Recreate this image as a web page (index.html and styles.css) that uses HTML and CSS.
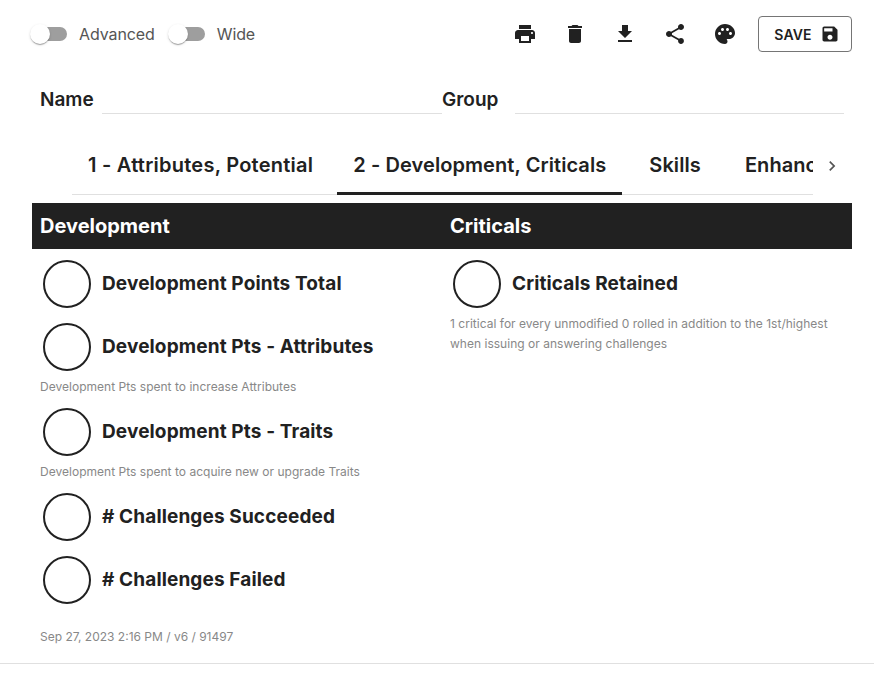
FILE: index.html
```html
<!DOCTYPE html>
<html lang="en">
<head>
<meta charset="utf-8">
<title>Character sheet</title>
<link rel="stylesheet" href="styles.css">
</head>
<body>
<div class="page">
  <header class="toolbar">
    <div class="toggles">
      <label class="toggle"><span class="switch"><span class="track"></span><span class="thumb"></span></span><span>Advanced</span></label>
      <label class="toggle"><span class="switch"><span class="track"></span><span class="thumb"></span></span><span>Wide</span></label>
    </div>
    <div class="actions">
      <span class="icon-btn"><svg viewBox="0 0 24 24"><path d="M19 8H5c-1.66 0-3 1.34-3 3v6h4v4h12v-4h4v-6c0-1.66-1.34-3-3-3zm-3 11H8v-5h8v5zm3-7c-.55 0-1-.45-1-1s.45-1 1-1 1 .45 1 1-.45 1-1 1zm-1-9H6v4h12V3z"/></svg></span>
      <span class="icon-btn"><svg viewBox="0 0 24 24"><path d="M6 19c0 1.1.9 2 2 2h8c1.1 0 2-.9 2-2V7H6v12zM19 4h-3.500l-1-1h-5l-1 1H5v2h14V4z"/></svg></span>
      <span class="icon-btn"><svg viewBox="0 0 24 24"><path d="M19 9h-4V3H9v6H5l7 7 7-7zM5 18v2h14v-2H5z"/></svg></span>
      <span class="icon-btn"><svg viewBox="0 0 24 24"><path d="M18 16.080c-.76 0-1.440.3-1.960.77L8.910 12.700c.05-.23.09-.46.09-.7s-.04-.47-.09-.7l7.050-4.110c.54.5 1.250.81 2.040.81 1.660 0 3-1.340 3-3s-1.340-3-3-3-3 1.340-3 3c0 .24.04.47.09.7L8.040 9.810C7.500 9.310 6.790 9 6 9c-1.660 0-3 1.340-3 3s1.340 3 3 3c.79 0 1.500-.31 2.040-.81l7.120 4.160c-.05.21-.08.43-.08.65 0 1.610 1.310 2.920 2.920 2.920 1.610 0 2.920-1.310 2.920-2.920s-1.310-2.920-2.920-2.920z"/></svg></span>
      <span class="icon-btn"><svg viewBox="0 0 24 24"><path d="M12 2C6.490 2 2 6.490 2 12s4.490 10 10 10c1.380 0 2.500-1.120 2.500-2.500 0-.61-.23-1.200-.64-1.670-.08-.1-.13-.21-.13-.33 0-.28.22-.5.5-.5H16c3.310 0 6-2.690 6-6 0-4.960-4.490-9-10-9zm5.500 11c-.83 0-1.500-.67-1.500-1.500s.67-1.500 1.500-1.500 1.500.67 1.500 1.500-.67 1.500-1.500 1.500zm-3-4c-.83 0-1.500-.67-1.500-1.500S13.670 6 14.500 6s1.500.67 1.500 1.500S15.330 9 14.500 9zM5 11.500c0-.83.67-1.500 1.500-1.500s1.500.67 1.500 1.500S7.330 13 6.500 13 5 12.330 5 11.500zm6-4c0 .83-.67 1.500-1.500 1.500S8 8.330 8 7.500 8.670 6 9.500 6s1.500.67 1.500 1.500z"/></svg></span>
      <button class="save" type="button">SAVE<svg viewBox="0 0 24 24"><path d="M17 3H5c-1.110 0-2 .9-2 2v14c0 1.100.89 2 2 2h14c1.100 0 2-.9 2-2V7l-4-4zm-5 16c-1.660 0-3-1.340-3-3s1.340-3 3-3 3 1.340 3 3-1.340 3-3 3zm3-10H5V5h10v4z"/></svg></button>
    </div>
  </header>

  <section class="identity">
    <span class="id-label name-label">Name</span><span class="id-line name-line"></span>
    <span class="id-label group-label">Group</span><span class="id-line group-line"></span>
  </section>

  <nav class="tabs">
    <div class="tab-scroll">
      <span class="tab tab-a">1 - Attributes, Potential</span>
      <span class="tab tab-b active">2 - Development, Criticals</span>
      <span class="tab tab-c">Skills</span>
      <span class="tab tab-d">Enhancements</span>
    </div>
    <span class="chevron"><svg viewBox="0 0 24 24"><path d="M10 6 8.590 7.410 13.170 12l-4.580 4.590L10 18l6-6z"/></svg></span>
  </nav>

  <main class="sheet">
    <div class="band">
      <h2 class="band-title">Development</h2>
      <h2 class="band-title">Criticals</h2>
    </div>
    <div class="cols">
      <div class="col col-left">
        <div class="stat"><span class="dot"></span><span class="stat-label">Development Points Total</span></div>
        <div class="stat"><span class="dot"></span><span class="stat-label">Development Pts - Attributes</span></div>
        <p class="hint">Development Pts spent to increase Attributes</p>
        <div class="stat"><span class="dot"></span><span class="stat-label">Development Pts - Traits</span></div>
        <p class="hint">Development Pts spent to acquire new or upgrade Traits</p>
        <div class="stat"><span class="dot"></span><span class="stat-label"># Challenges Succeeded</span></div>
        <div class="stat"><span class="dot"></span><span class="stat-label"># Challenges Failed</span></div>
      </div>
      <div class="col col-right">
        <div class="stat"><span class="dot"></span><span class="stat-label">Criticals Retained</span></div>
        <p class="hint hint-wrap">1 critical for every unmodified 0 rolled in addition to the 1st/highest when issuing or answering challenges</p>
      </div>
    </div>
    <p class="stamp">Sep 27, 2023 2:16 PM / v6 / 91497</p>
  </main>
  <hr class="rule">
</div>
</body>
</html>
```
FILE: styles.css
```css
* { box-sizing: border-box; }
html, body { margin: 0; background: #fff; }
body { font-family: Inter, "Liberation Sans", sans-serif; color: #212121; overflow: hidden; }
.page { width: 874px; height: 681px; }

.toolbar { display: flex; justify-content: space-between; align-items: center; padding: 16px 22px 0 21px; height: 52px; }
.toggles { display: flex; align-items: center; }
.toggle { display: flex; align-items: center; font-size: 16px; color: #555; letter-spacing: -.1px; margin-right: 4px; }
.switch { position: relative; display: block; width: 58px; height: 38px; }
.track { position: absolute; left: 12px; top: 12px; width: 34px; height: 14px; border-radius: 7px; background: #9e9e9e; }
.thumb { position: absolute; left: 9px; top: 9px; width: 20px; height: 20px; border-radius: 50%; background: #fff; box-shadow: 0 2px 1px -1px rgba(0,0,0,.2), 0 1px 1px rgba(0,0,0,.14), 0 1px 3px rgba(0,0,0,.12); }
.actions { display: flex; align-items: center; }
.icon-btn { display: flex; width: 24px; height: 24px; margin-right: 26px; }
.icon-btn svg { width: 24px; height: 24px; fill: #212121; }
.actions .icon-btn:nth-child(5) { margin-right: 21px; }
.save { display: flex; align-items: center; justify-content: center; gap: 8px; width: 94px; height: 36px; padding: 0 0 0 4px; background: #fff; border: 1px solid #757575; border-radius: 4px; font: 600 14px Inter, "Liberation Sans", sans-serif; letter-spacing: .2px; color: #212121; }
.save svg { width: 20px; height: 20px; fill: #212121; }

.identity { display: flex; align-items: flex-end; height: 62px; padding-left: 40px; }
.id-label { font-size: 19px; font-weight: 600; line-height: 26px; margin-bottom: 1px; }
.name-label { width: 62px; }
.group-label { width: 73px; }
.id-line { display: block; height: 1px; background: #e0e0e0; }
.name-line { width: 340px; }
.group-line { width: 329px; }

.tabs { display: flex; height: 48px; margin: 32px 0 0 72px; }
.tab-scroll { display: flex; width: 741px; height: 49px; overflow: hidden; box-shadow: inset 0 -1px 0 #e0e0e0; white-space: nowrap; }
.tab { flex: none; height: 49px; padding: 0 16px; font-size: 20px; font-weight: 600; line-height: 38px; letter-spacing: .08px; }
.tab-a { letter-spacing: .25px; }
.tab-b { margin-left: 8px; }
.tab-c { margin-left: 11px; }
.tab-d { margin-left: 12px; }
.active { border-bottom: 3px solid #212121; }
.chevron { display: flex; align-items: center; justify-content: center; width: 38px; height: 40px; }
.chevron svg { width: 20px; height: 20px; fill: #555; }

.sheet { margin: 9px 22px 0 32px; }
.band { display: grid; grid-template-columns: 410px 1fr; align-items: center; height: 46px; background: #212121; padding-left: 8px; }
.band-title { margin: 0; font-size: 20px; font-weight: 700; line-height: 46px; color: #fff; }
.cols { display: grid; grid-template-columns: 410px 1fr; height: 378px; padding-top: 11px; }
.col-left { padding-left: 8px; }
.col-right { padding-left: 8px; }
.stat { display: flex; align-items: center; height: 48px; margin-bottom: 15px; padding-left: 3px; }
.dot { flex: none; width: 48px; height: 48px; border: 2px solid #212121; border-radius: 50%; margin-right: 11px; }
.stat-label { font-size: 19px; font-weight: 700; line-height: 24px; letter-spacing: .13px; white-space: nowrap; }
.hint { margin: -9px 0 11px; font-size: 12px; line-height: 20px; color: #888; letter-spacing: .02px; }
.hint-wrap { width: 395px; }
.stamp { margin: 0 0 0 8px; font-size: 12px; line-height: 20px; color: #888; }
.rule { border: 0; height: 1px; background: #e0e0e0; margin: 16px 0 0; }
```
